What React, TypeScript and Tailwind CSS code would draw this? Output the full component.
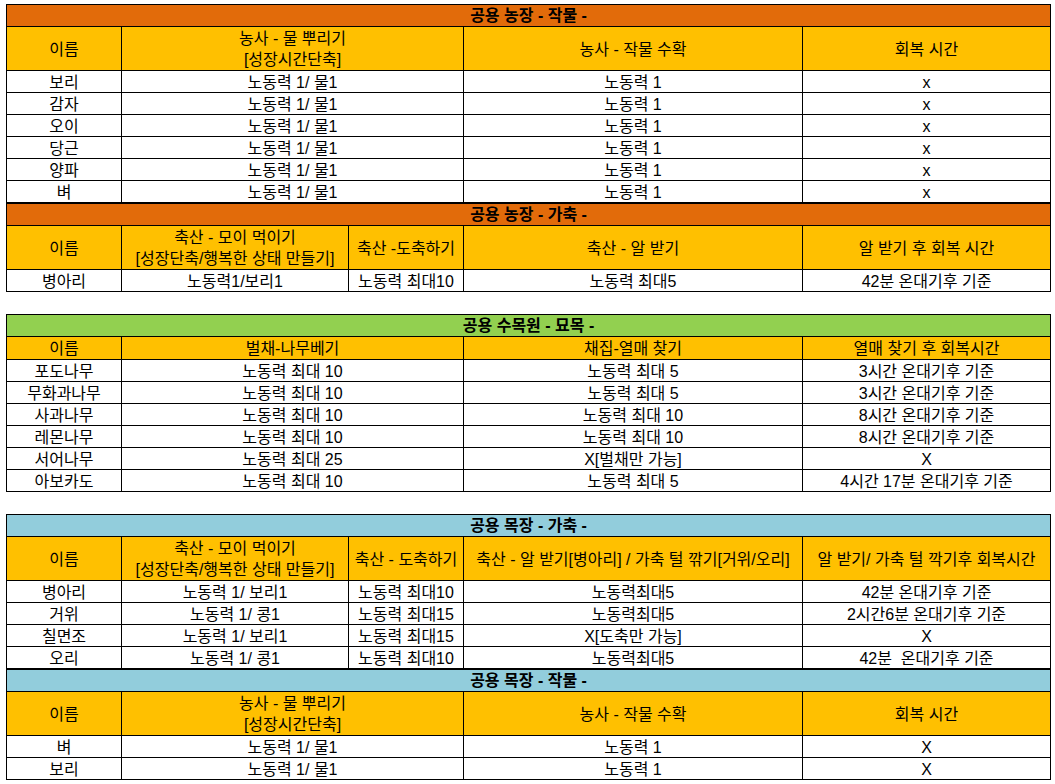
import React from "react";

type Row = string[];

type Section = {
  title: string;
  titleColor: string;
  cols: number[];
  header: string[][];
  headerTall?: boolean;
  rows: Row[];
};

const COLS4 = [115, 342, 339, 248];
const COLS5 = [115, 227, 115, 339, 248];

const farm: Section[] = [
  {
    title: "공용 농장 - 작물 -",
    titleColor: "bg-[#e26b0a]",
    cols: COLS4,
    headerTall: true,
    header: [["이름"], ["농사 - 물 뿌리기", "[성장시간단축]"], ["농사 - 작물 수확"], ["회복 시간"]],
    rows: [
      ["보리", "노동력 1/ 물1", "노동력 1", "x"],
      ["감자", "노동력 1/ 물1", "노동력 1", "x"],
      ["오이", "노동력 1/ 물1", "노동력 1", "x"],
      ["당근", "노동력 1/ 물1", "노동력 1", "x"],
      ["양파", "노동력 1/ 물1", "노동력 1", "x"],
      ["벼", "노동력 1/ 물1", "노동력 1", "x"],
    ],
  },
  {
    title: "공용 농장 - 가축 -",
    titleColor: "bg-[#e26b0a]",
    cols: COLS5,
    headerTall: true,
    header: [
      ["이름"],
      ["축산 - 모이 먹이기", "[성장단축/행복한 상태 만들기]"],
      ["축산 -도축하기"],
      ["축산 - 알 받기"],
      ["알 받기 후 회복 시간"],
    ],
    rows: [["병아리", "노동력1/보리1", "노동력 최대10", "노동력 최대5", "42분 온대기후 기준"]],
  },
];

const orchard: Section[] = [
  {
    title: "공용 수목원 - 묘목 -",
    titleColor: "bg-[#92d050]",
    cols: COLS4,
    header: [["이름"], ["벌채-나무베기"], ["채집-열매 찾기"], ["열매 찾기 후 회복시간"]],
    rows: [
      ["포도나무", "노동력 최대 10", "노동력 최대 5", "3시간 온대기후 기준"],
      ["무화과나무", "노동력 최대 10", "노동력 최대 5", "3시간 온대기후 기준"],
      ["사과나무", "노동력 최대 10", "노동력 최대 10", "8시간 온대기후 기준"],
      ["레몬나무", "노동력 최대 10", "노동력 최대 10", "8시간 온대기후 기준"],
      ["서어나무", "노동력 최대 25", "X[벌채만 가능]", "X"],
      ["아보카도", "노동력 최대 10", "노동력 최대 5", "4시간 17분 온대기후 기준"],
    ],
  },
];

const ranch: Section[] = [
  {
    title: "공용 목장 - 가축 -",
    titleColor: "bg-[#92cddc]",
    cols: COLS5,
    headerTall: true,
    header: [
      ["이름"],
      ["축산 - 모이 먹이기", "[성장단축/행복한 상태 만들기]"],
      ["축산 - 도축하기"],
      ["축산 - 알 받기[병아리] / 가축 털 깎기[거위/오리]"],
      ["알 받기/ 가축 털 깍기후 회복시간"],
    ],
    rows: [
      ["병아리", "노동력 1/ 보리1", "노동력 최대10", "노동력최대5", "42분 온대기후 기준"],
      ["거위", "노동력 1/ 콩1", "노동력 최대15", "노동력최대5", "2시간6분 온대기후 기준"],
      ["칠면조", "노동력 1/ 보리1", "노동력 최대15", "X[도축만 가능]", "X"],
      ["오리", "노동력 1/ 콩1", "노동력 최대10", "노동력최대5", "42분  온대기후 기준"],
    ],
  },
  {
    title: "공용 목장 - 작물 -",
    titleColor: "bg-[#92cddc]",
    cols: COLS4,
    headerTall: true,
    header: [["이름"], ["농사 - 물 뿌리기", "[성장시간단축]"], ["농사 - 작물 수확"], ["회복 시간"]],
    rows: [
      ["벼", "노동력 1/ 물1", "노동력 1", "X"],
      ["보리", "노동력 1/ 물1", "노동력 1", "X"],
    ],
  },
];

function SectionBlock({ s }: { s: Section }) {
  return (
    <table className="w-[1044px] table-fixed border-collapse">
      <colgroup>
        {s.cols.map((w, i) => (
          <col key={i} style={{ width: w }} />
        ))}
      </colgroup>
      <tbody>
        <tr className="h-[22px]">
          <td colSpan={s.cols.length} className={`${s.titleColor} border border-black p-0 pt-px text-center font-bold leading-[20px]`}>
            {s.title}
          </td>
        </tr>
        <tr className={s.headerTall ? "h-[44px]" : "h-[22px]"}>
          {s.header.map((lines, i) => (
            <td key={i} className="bg-[#ffc000] border border-black p-0 pt-px text-center leading-[21px] whitespace-nowrap">
              {lines.map((l, j) => (
                <div key={j}>{l}</div>
              ))}
            </td>
          ))}
        </tr>
        {s.rows.map((r, i) => (
          <tr key={i} className="h-[22px]">
            {r.map((c, j) => (
              <td key={j} className="bg-white border border-black p-0 pt-[2px] text-center leading-[19px] whitespace-pre">
                {c}
              </td>
            ))}
          </tr>
        ))}
      </tbody>
    </table>
  );
}

export default function App() {
  return (
    <div
      className="w-[1055px] h-[784px] bg-white text-black text-[16px] pl-[6px] pt-[4px] overflow-hidden"
      style={{ fontFamily: '"Liberation Sans", "Noto Sans CJK KR", sans-serif' }}
    >
      <div className="flex flex-col">
        {farm.map((s, i) => (
          <SectionBlock key={i} s={s} />
        ))}
      </div>
      <div className="flex flex-col mt-[22px]">
        {orchard.map((s, i) => (
          <SectionBlock key={i} s={s} />
        ))}
      </div>
      <div className="flex flex-col mt-[22px]">
        {ranch.map((s, i) => (
          <SectionBlock key={i} s={s} />
        ))}
      </div>
    </div>
  );
}
